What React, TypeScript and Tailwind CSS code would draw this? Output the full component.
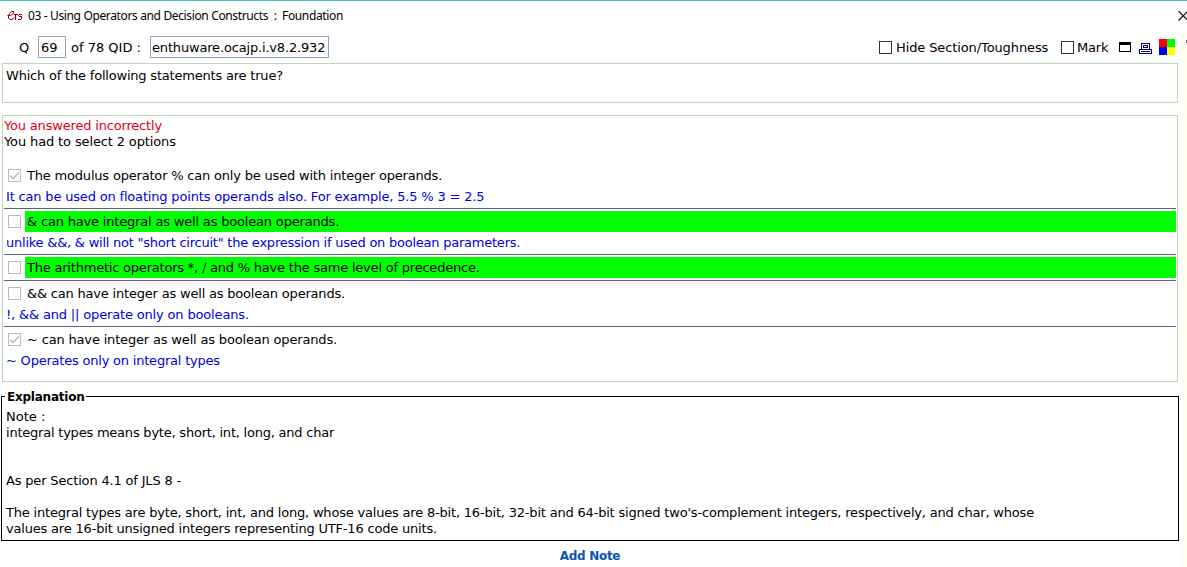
import React from "react";

type Option = {
  text: string;
  feedback?: string;
  checked?: boolean;
  correct?: boolean;
  textClass: string;
  feedbackClass?: string;
};

const options: Option[] = [
  {
    text: "The modulus operator % can only be used with integer operands.",
    textClass: "tracking-[-0.19px]",
    feedback: "It can be used on floating points operands also. For example, 5.5 % 3 = 2.5",
    feedbackClass: "tracking-[-0.175px]",
    checked: true,
  },
  {
    text: "& can have integral as well as boolean operands.",
    textClass: "tracking-[-0.18px]",
    feedback: 'unlike &&, & will not "short circuit" the expression if used on boolean parameters.',
    feedbackClass: "tracking-[-0.235px]",
    correct: true,
  },
  {
    text: "The arithmetic operators *, / and % have the same level of precedence.",
    textClass: "tracking-[-0.21px]",
    correct: true,
  },
  {
    text: "&& can have integer as well as boolean operands.",
    textClass: "tracking-[-0.195px]",
    feedback: "!, && and || operate only on booleans.",
    feedbackClass: "tracking-[-0.16px]",
  },
  {
    text: "~ can have integer as well as boolean operands.",
    textClass: "tracking-[-0.17px]",
    feedback: "~ Operates only on integral types",
    feedbackClass: "tracking-[-0.21px]",
    checked: true,
  },
];

function DisabledCheck({ checked }: { checked?: boolean }) {
  return (
    <svg width="13" height="13" viewBox="0 0 13 13" className="shrink-0" shapeRendering="crispEdges">
      <rect x="0.5" y="0.5" width="12" height="12" fill="#fff" stroke="#bcbcbc" />
      {checked && (
        <path d="M2 6.5 L5 9.5 L11 3.5" fill="none" stroke="#b0b8b0" strokeWidth="1.3" shapeRendering="auto" />
      )}
    </svg>
  );
}

function OptionRow({ option, last }: { option: Option; last: boolean }) {
  return (
    <div className={last ? "" : "border-b border-[#62627e]"}>
      <div className="flex h-[23px] items-center pt-[2px] pl-1">
        <DisabledCheck checked={option.checked} />
        <div className={`ml-1 flex h-[21px] flex-1 items-center pl-[2px] ${option.correct ? "bg-[#00ff00]" : ""}`}>
          <span className={option.textClass}>{option.text}</span>
        </div>
      </div>
      {option.feedback ? (
        <div className="flex h-[22px] items-center pb-px pl-[2px] text-[#0000e0]">
          <span className={option.feedbackClass}>{option.feedback}</span>
        </div>
      ) : (
        <div className="h-[2px]" />
      )}
    </div>
  );
}

export default function App() {
  return (
    <div className="flex h-[567px] w-[1187px] flex-col overflow-hidden border-t border-[#43bdbd] bg-white font-['DejaVu_Sans',sans-serif] text-[13px] leading-4 whitespace-pre text-black">
      <header className="flex h-[30px] shrink-0 items-center">
        <svg width="16" height="12" viewBox="0 0 16 12" className="ml-[7px]" fill="none" stroke="#850010" strokeWidth="1">
          <path d="M0.5 5.5 H3.5 L6.5 3.5 V1.5 H4.5 L2.5 3.5 L1.5 6 V8 L3 9.5 H5 L7.5 7.5" />
          <path d="M7 4.5 H11 M8.5 4.5 V10 M15 4.5 H12.5 L11.5 5.5 L12.5 6.5 H14 L14.5 7.5 V8.5 L13.5 9.5 H11" shapeRendering="crispEdges" />
        </svg>
        <span className="ml-[5px] font-['Noto_Sans',sans-serif] text-[12px] tracking-[-0.36px]">03 - Using Operators and Decision Constructs  :  Foundation</span>
        <svg width="11" height="10" viewBox="0 0 11 10" className="-mr-[2px] ml-auto" stroke="#000" strokeWidth="1.1">
          <path d="M0.5 0 L10 9.5 M10 0 L0.5 9.5" />
        </svg>
      </header>
      <div className="flex min-h-0 flex-1">
        <div className="flex w-[1182px] shrink-0 flex-col">
          <div className="flex h-8 shrink-0 items-center">
            <span className="ml-[19px] w-[19px] pt-px">Q</span>
            <span className="flex h-[22px] w-7 items-center border border-[#9c9cbc] pt-px pl-[2px]">69</span>
            <span className="ml-[5px] w-[79px] pt-px">of 78 QID :</span>
            <span className="flex h-[22px] w-[179px] items-center border border-[#9c9cbc] pt-px pl-[1px] tracking-[-0.17px]">enthuware.ocajp.i.v8.2.932</span>
            <span className="ml-auto size-[13px] border border-[#333]" />
            <span className="ml-1 w-[165px] pt-px tracking-[-0.11px]">Hide Section/Toughness</span>
            <span className="size-[13px] border border-[#333]" />
            <span className="ml-[3px] w-[42px] pt-px tracking-[-0.2px]">Mark</span>
            <svg width="12" height="10" viewBox="0 0 12 10" shapeRendering="crispEdges">
              <path d="M0 0H12V10H0Z M1 3V9H11V3Z" fillRule="evenodd" />
            </svg>
            <svg width="13" height="11" viewBox="0 0 13 11" className="mt-[2px] ml-2" fill="none" stroke="#000070" shapeRendering="crispEdges">
              <path d="M2.5 6V0.5H10.5V6M4.5 2.5H8.5V4.5H4.5ZM0.5 10.5V6.5H12.5V10.5ZM2 8.5H11" />
            </svg>
            <svg width="16" height="16" viewBox="0 0 16 16" className="mr-[7px] ml-[7px]" shapeRendering="crispEdges">
              <path fill="#ff0000" d="M0 0h8v8H0z" />
              <path fill="#00ff00" d="M8 0h8v8H8z" />
              <path fill="#0000ff" d="M0 8h8v8H0z" />
              <path fill="#ffff00" d="M8 8h8v8H8z" />
            </svg>
          </div>
          <section className="mr-1 ml-[2px] h-10 shrink-0 border border-[#bcd8bc] pt-1 pl-[3px] tracking-[-0.2px]">Which of the following statements are true?</section>
          <section className="mt-3 mr-1 ml-[2px] h-[267px] shrink-0 border border-[#bcd8bc] px-px">
            <div className="pt-[2px] tracking-[-0.18px] text-[#e00014]">You answered incorrectly</div>
            <div className="tracking-[-0.13px]">You had to select 2 options</div>
            <div className="h-[13px]" />
            {options.map((option, i) => (
              <OptionRow key={option.text} option={option} last={i === options.length - 1} />
            ))}
          </section>
          <section className="mt-[7px] mr-[3px] ml-px flex h-[152px] shrink-0 flex-col">
            <div className="flex h-[15px] items-end">
              <span className="h-[8px] w-1 border-t border-l border-black" />
              <span className="h-[15px] w-[81px] pl-[2px] text-[12px] leading-[17px] font-bold tracking-[-0.23px]">Explanation</span>
              <span className="h-[8px] flex-1 border-t border-r border-black" />
            </div>
            <div className="flex-1 border-x border-b border-black pt-[5px] pl-1">
              <div>Note :</div>
              <div className="tracking-[-0.22px]">integral types means byte, short, int, long, and char</div>
              <div className="h-8" />
              <div className="tracking-[-0.17px]">As per Section 4.1 of JLS 8 -</div>
              <div className="h-4" />
              <div className="tracking-[-0.193px]">The integral types are byte, short, int, and long, whose values are 8-bit, 16-bit, 32-bit and 64-bit signed two's-complement integers, respectively, and char, whose</div>
              <div className="tracking-[-0.19px]">values are 16-bit unsigned integers representing UTF-16 code units.</div>
            </div>
          </section>
          <button className="mt-[7px] mr-[2px] self-center text-[12px] leading-4 font-bold tracking-[-0.3px] text-[#0854b4]">Add Note</button>
        </div>
        <aside className="flex-1 bg-[#fffcf0]">
          <div className="mt-[9px] ml-1 h-[3px] w-px bg-[#66667c]" />
        </aside>
      </div>
    </div>
  );
}
